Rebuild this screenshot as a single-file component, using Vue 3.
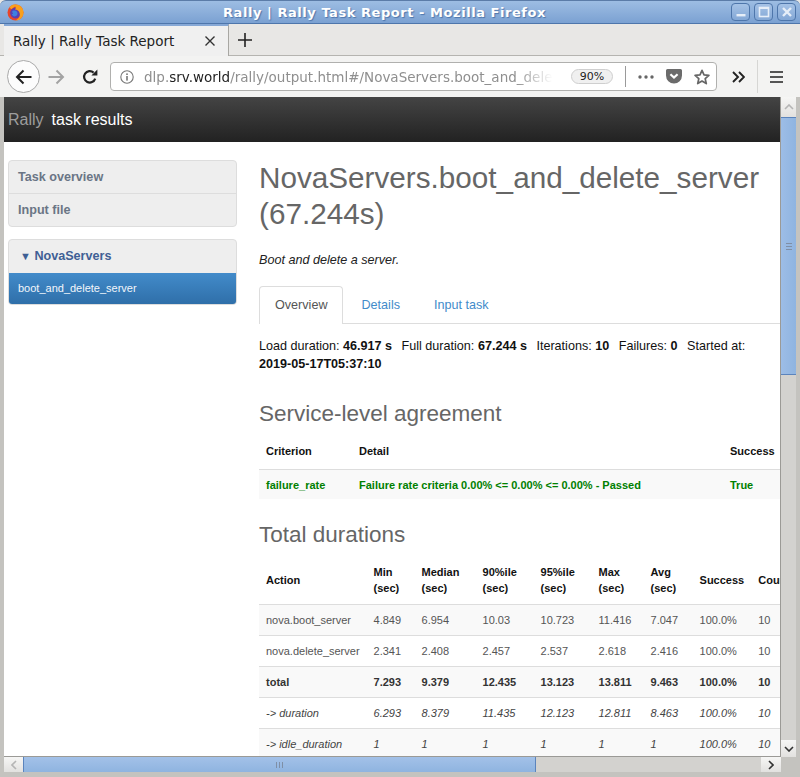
<script setup>
const durationRows = [
  { cls: '', cells: ['nova.boot_server', '4.849', '6.954', '10.03', '10.723', '11.416', '7.047', '100.0%', '10'] },
  { cls: '', cells: ['nova.delete_server', '2.341', '2.408', '2.457', '2.537', '2.618', '2.416', '100.0%', '10'] },
  { cls: 'bold', cells: ['total', '7.293', '9.379', '12.435', '13.123', '13.811', '9.463', '100.0%', '10'] },
  { cls: 'ital', cells: ['-> duration', '6.293', '8.379', '11.435', '12.123', '12.811', '8.463', '100.0%', '10'] },
  { cls: 'ital', cells: ['-> idle_duration', '1', '1', '1', '1', '1', '1', '100.0%', '10'] },
];
const colWidths = [106, 48, 61, 58, 58, 52, 49, 58, 50];
</script>

<template>
  <div class="window">
    <div class="titlebar">
      <svg class="fx-logo" width="17" height="17" viewBox="0 0 17 17">
        <circle cx="8.5" cy="8.5" r="8" fill="#e8452c" />
        <circle cx="8.5" cy="9" r="5.4" fill="#5a3fb0" />
        <path d="M1 6 C2 2.5 5 .5 8.5 .5 C13 .5 16.5 4 16.5 8.5 C16.5 13 13 16.5 8.5 16.5 C12 15 13.5 12 12.6 9 C12 7 10 5.5 8 5.6 C9 4.4 9 3.4 8.2 2.6 C7 3.4 5.4 4 4.6 5.2 C3.6 4.8 3 4 2.8 3 C2 3.8 1.4 5 1 6 Z" fill="#f9a01b" />
        <path d="M5.4 7 C7 6.2 9.6 6.6 10.4 8.6 C11 10.6 9.6 12.4 7.6 12.4 C6 12.4 4.8 11.2 4.6 9.8 C5.2 10.2 6 10 6 9.4 C5.4 8.8 5 8 5.4 7 Z" fill="#3e7fe0" />
      </svg>
      <span class="win-title">Rally | Rally Task Report - Mozilla Firefox</span>
      <div class="win-btns">
        <button class="win-btn">
          <svg width="12" height="12" viewBox="0 0 12 12"><rect x="1.5" y="8" width="9" height="2.4" fill="#e6eef8" /></svg>
        </button>
        <button class="win-btn">
          <svg width="12" height="12" viewBox="0 0 12 12"><rect x="1.5" y="1.5" width="9" height="9" fill="none" stroke="#e6eef8" stroke-width="1.6" /><rect x="1" y="1" width="10" height="2" fill="#e6eef8" /></svg>
        </button>
        <button class="win-btn">
          <svg width="12" height="12" viewBox="0 0 12 12"><path d="M2 2 L10 10 M10 2 L2 10" stroke="#e6eef8" stroke-width="2.4" /></svg>
        </button>
      </div>
    </div>

    <div class="tabbar">
      <div class="tab">
        <span class="tab-label">Rally | Rally Task Report</span>
        <svg width="12" height="12" viewBox="0 0 12 12"><path d="M1.5 1.5 L10.5 10.5 M10.5 1.5 L1.5 10.5" stroke="#333" stroke-width="1.4" /></svg>
      </div>
      <svg class="new-tab" width="14" height="14" viewBox="0 0 14 14"><path d="M7 0 V14 M0 7 H14" stroke="#222" stroke-width="1.6" /></svg>
    </div>

    <div class="toolbar">
      <div class="back-btn">
        <svg width="18" height="16" viewBox="0 0 18 16"><path d="M16.5 8 H2 M8.5 1.5 L2 8 L8.5 14.5" fill="none" stroke="#222" stroke-width="2" /></svg>
      </div>
      <svg class="fwd" width="17" height="16" viewBox="0 0 17 16"><path d="M0.5 8 H15 M8.5 1.5 L15 8 L8.5 14.5" fill="none" stroke="#a3a3a3" stroke-width="2" /></svg>
      <svg class="reload" width="16" height="16" viewBox="0 0 16 16"><path d="M13.2 9.6 A5.7 5.7 0 1 1 11.6 3.6" fill="none" stroke="#222" stroke-width="2.2" /><path d="M9.4 6.6 H15.4 V0.6 Z" fill="#222" /></svg>
      <div class="urlbar">
        <svg class="info" width="14" height="14" viewBox="0 0 14 14"><circle cx="7" cy="7" r="6.2" fill="none" stroke="#777" stroke-width="1.1" /><rect x="6.2" y="6" width="1.6" height="4.6" fill="#777" /><rect x="6.2" y="3.4" width="1.6" height="1.6" fill="#777" /></svg>
        <div class="url"><span class="dim">dlp.</span>srv.world<span class="dim">/rally/output.html#/NovaServers.boot_and_delete_server</span></div>
        <span class="zoom-pill">90%</span>
        <span class="url-sep"></span>
        <svg class="dots" width="16" height="4" viewBox="0 0 16 4"><circle cx="2" cy="2" r="1.7" fill="#666" /><circle cx="8" cy="2" r="1.7" fill="#666" /><circle cx="14" cy="2" r="1.7" fill="#666" /></svg>
        <svg class="pocket" width="16" height="15" viewBox="0 0 16 15"><path d="M1.5 0 H14.5 A1.5 1.5 0 0 1 16 1.5 V6.5 A8 8 0 0 1 0 6.5 V1.5 A1.5 1.5 0 0 1 1.5 0 Z" fill="#6b6b6b" /><path d="M4.4 5.2 L8 8.6 L11.6 5.2" fill="none" stroke="#fff" stroke-width="2.2" /></svg>
        <svg class="star" width="16" height="16" viewBox="0 0 16 16"><path d="M8 1.4 L10 5.9 L14.9 6.4 L11.2 9.7 L12.3 14.6 L8 12 L3.7 14.6 L4.8 9.7 L1.1 6.4 L6 5.9 Z" fill="none" stroke="#666" stroke-width="1.7" stroke-linejoin="round" /></svg>
      </div>
      <svg class="chevrons" width="13" height="12" viewBox="0 0 13 12"><path d="M1 1 L6 6 L1 11 M7 1 L12 6 L7 11" fill="none" stroke="#222" stroke-width="1.9" /></svg>
      <span class="tool-sep"></span>
      <svg class="burger" width="13" height="12" viewBox="0 0 13 12"><path d="M0 1 H13 M0 6 H13 M0 11 H13" stroke="#222" stroke-width="1.6" /></svg>
    </div>

    <div class="viewport">
      <div class="page-row">
        <div class="page">
          <div class="navbar">
            <span class="brand">Rally</span>
            <span class="brand-sub">task results</span>
          </div>
          <div class="columns">
            <aside class="sidebar">
              <div class="panel">
                <div class="panel-row">Task overview</div>
                <div class="panel-row">Input file</div>
              </div>
              <div class="panel">
                <div class="panel-row scenario-head"><span class="caret">▼</span> NovaServers</div>
                <div class="scenario-item">boot_and_delete_server</div>
              </div>
            </aside>
            <main class="content">
              <h1>NovaServers.boot_and_delete_server (67.244s)</h1>
              <p class="descr">Boot and delete a server.</p>
              <div class="tabs">
                <span class="nav-tab active">Overview</span>
                <span class="nav-tab">Details</span>
                <span class="nav-tab">Input task</span>
              </div>
              <div class="summary">
                Load duration: <b>46.917 s</b> <span class="gap"></span>Full duration: <b>67.244 s</b> <span class="gap"></span>Iterations: <b>10</b> <span class="gap"></span>Failures: <b>0</b> <span class="gap"></span>Started at: <b>2019-05-17T05:37:10</b>
              </div>

              <h2>Service-level agreement</h2>
              <table class="tbl sla">
                <colgroup><col style="width: 93px" /><col style="width: 371px" /><col style="width: 58px" /></colgroup>
                <thead>
                  <tr><th>Criterion</th><th>Detail</th><th>Success</th></tr>
                </thead>
                <tbody>
                  <tr class="pass">
                    <td>failure_rate</td>
                    <td>Failure rate criteria 0.00% &lt;= 0.00% &lt;= 0.00% - Passed</td>
                    <td>True</td>
                  </tr>
                </tbody>
              </table>

              <h2 class="second">Total durations</h2>
              <table class="tbl durations">
                <colgroup><col v-for="(w, i) in colWidths" :key="i" :style="{ width: w + 'px' }" /></colgroup>
                <thead>
                  <tr>
                    <th>Action</th><th>Min<br />(sec)</th><th>Median<br />(sec)</th><th>90%ile<br />(sec)</th><th>95%ile<br />(sec)</th><th>Max<br />(sec)</th><th>Avg<br />(sec)</th><th>Success</th><th>Count</th>
                  </tr>
                </thead>
                <tbody>
                  <tr v-for="row in durationRows" :key="row.cells[0]" :class="row.cls">
                    <td v-for="(c, i) in row.cells" :key="i">{{ c }}</td>
                  </tr>
                </tbody>
              </table>
            </main>
          </div>
        </div>
        <div class="vscroll">
          <div class="sb-btn sb-up">
            <svg width="10" height="6" viewBox="0 0 10 6"><path d="M1 5 L5 1 L9 5" fill="none" stroke="#b5b5b5" stroke-width="1.6" /></svg>
          </div>
          <div class="v-thumb">
            <svg width="6" height="7" viewBox="0 0 6 7"><path d="M0 .5 H6 M0 3.5 H6 M0 6.5 H6" stroke="#7f8fa6" stroke-width="1" /></svg>
          </div>
          <div class="v-track"></div>
          <div class="sb-btn sb-down">
            <svg width="10" height="6" viewBox="0 0 10 6"><path d="M1 1 L5 5 L9 1" fill="none" stroke="#333" stroke-width="1.6" /></svg>
          </div>
        </div>
      </div>
      <div class="hscroll">
        <div class="sb-btn sb-left">
          <svg width="6" height="10" viewBox="0 0 6 10"><path d="M5 1 L1 5 L5 9" fill="none" stroke="#b5b5b5" stroke-width="1.6" /></svg>
        </div>
        <div class="h-thumb">
          <svg width="7" height="6" viewBox="0 0 7 6"><path d="M.5 0 V6 M3.5 0 V6 M6.5 0 V6" stroke="#7f8fa6" stroke-width="1" /></svg>
        </div>
        <div class="h-track"></div>
        <div class="sb-btn sb-right">
          <svg width="6" height="10" viewBox="0 0 6 10"><path d="M1 1 L5 5 L1 9" fill="none" stroke="#333" stroke-width="1.6" /></svg>
        </div>
        <div class="corner"></div>
      </div>
    </div>
  </div>
</template>

<style>
html, body { margin: 0; overflow: hidden; background: #fff; }
</style>

<style scoped>
.window {
  width: 800px;
  height: 777px;
  display: flex;
  flex-direction: column;
  overflow: hidden;
  box-sizing: border-box;
  background: #e8e7e5;
  font-family: "Liberation Sans", Arial, sans-serif;
  border-bottom: 5px solid #c4c3bf;
}

/* window chrome */
.titlebar {
  height: 24px;
  flex: none;
  display: flex;
  align-items: center;
  padding: 0 4px 0 7px;
  box-sizing: border-box;
  background: linear-gradient(#9dbde3, #7ba1d2);
  border-bottom: 1px solid #4e76ab;
  border-top: 1px solid #5b7ca8;
  border-radius: 6px 6px 0 0;
}
.fx-logo { flex: none; }
.win-title {
  flex: 1;
  text-align: center;
  font-family: "DejaVu Sans", sans-serif;
  font-weight: 700;
  font-size: 13px;
  letter-spacing: 0.55px;
  color: #fff;
  text-shadow: 1px 1px 1px #4e76ab;
  padding-left: 14px;
}
.win-btns { display: flex; gap: 4px; }
.win-btn {
  width: 19px;
  height: 18px;
  padding: 0;
  display: flex;
  align-items: center;
  justify-content: center;
  border: 1px solid #4e76ab;
  border-radius: 4px;
  background: linear-gradient(#a5c2e6, #84a8d6);
}

.tabbar {
  height: 32px;
  flex: none;
  display: flex;
  align-items: center;
  padding-left: 4px;
  box-sizing: border-box;
  background: #e8e7e5;
  border-left: 0;
  border-bottom: 1px solid #b5b4b0;
}
.tab {
  width: 225px;
  height: 32px;
  box-sizing: border-box;
  display: flex;
  align-items: center;
  padding: 0 12px 0 9px;
  justify-content: space-between;
  background: #f0f0f0;
  border-top: 2px solid #86a8d6;
  border-right: 1px solid #a8a7a3;
}
.tab-label {
  font-family: "DejaVu Sans", sans-serif;
  font-size: 13.5px;
  color: #222;
}
.new-tab { margin-left: 9px; }

.toolbar {
  height: 41px;
  flex: none;
  display: flex;
  align-items: center;
  padding-left: 7px;
  box-sizing: border-box;
  background: #f3f3f2;
  border-left: 4px solid #f3f3f2;
  margin-left: 0;
}
.toolbar { padding-left: 3px; }
.back-btn {
  width: 33px;
  height: 33px;
  box-sizing: border-box;
  flex: none;
  border: 1px solid #a9a9a9;
  border-radius: 50%;
  background: #fcfcfc;
  display: flex;
  align-items: center;
  justify-content: center;
}
.fwd { margin-left: 8px; flex: none; }
.reload { margin-left: 17px; flex: none; }
.urlbar {
  width: 607px;
  height: 29px;
  flex: none;
  margin-left: 12px;
  box-sizing: border-box;
  display: flex;
  align-items: center;
  padding-left: 9px;
  background: #fff;
  border: 1px solid #b0b0ae;
  border-radius: 4px;
}
.info { flex: none; }
.url {
  width: 413px;
  margin-left: 10px;
  flex: none;
  white-space: nowrap;
  overflow: hidden;
  font-family: "DejaVu Sans", sans-serif;
  font-size: 13.5px;
  color: #1f1f1f;
  -webkit-mask-image: linear-gradient(to right, #000 90%, transparent 99%);
  mask-image: linear-gradient(to right, #000 90%, transparent 99%);
}
.dim { color: #8f8f8f; }
.zoom-pill {
  width: 42px;
  height: 15px;
  flex: none;
  margin-left: 14px;
  box-sizing: border-box;
  border: 1px solid #cfcfcf;
  border-radius: 8px;
  background: #f0f0f0;
  font-family: "DejaVu Sans", sans-serif;
  font-size: 11px;
  line-height: 13px;
  text-align: center;
  color: #222;
}
.url-sep { width: 1px; height: 21px; margin-left: 12px; background: #9a9a9a; flex: none; }
.dots { margin-left: 12px; flex: none; }
.pocket { margin-left: 12px; flex: none; }
.star { margin-left: 12px; flex: none; }
.chevrons { margin-left: 15px; flex: none; }
.tool-sep { width: 1px; height: 33px; margin-left: 12px; background: #d6d6d4; flex: none; }
.burger { margin-left: 12px; flex: none; }

/* viewport + scrollbars */
.viewport {
  flex: 1;
  min-height: 0;
  display: flex;
  flex-direction: column;
  padding-left: 4px;
  padding-right: 4px;
  background: #c4c3bf;
}
.page-row { flex: 1; min-height: 0; display: flex; }
.page { flex: 1; min-width: 0; overflow: hidden; background: #fff; border-bottom: 1px solid #9b9a96; }

.vscroll {
  width: 15px;
  flex: none;
  display: flex;
  flex-direction: column;
  background: #d3d2cf;
  border-left: 1px solid #9b9a96;
}
.sb-btn {
  flex: none;
  display: flex;
  align-items: center;
  justify-content: center;
  background: linear-gradient(#f6f6f5, #e2e1df);
}
.sb-up { height: 20px; border-bottom: 1px solid #5b84bd; }
.sb-down { height: 17px; }
.v-thumb {
  height: 256px;
  flex: none;
  display: flex;
  align-items: center;
  justify-content: center;
  background: linear-gradient(to right, #9dbde6, #8fb4e0);
  border-bottom: 1px solid #5b84bd;
}
.v-track { flex: 1; background: #d3d2cf; }

.hscroll { height: 15px; flex: none; display: flex; background: #d3d2cf; }
.sb-left { width: 19px; border-right: 1px solid #5b84bd; }
.sb-right { width: 20px; }
.h-thumb {
  width: 511px;
  flex: none;
  display: flex;
  align-items: center;
  justify-content: center;
  background: linear-gradient(#a3c1e8, #8fb4e0);
  border-right: 1px solid #5b84bd;
}
.h-track { flex: 1; background: #d3d2cf; }
.corner { width: 15px; flex: none; background: #c4c3bf; }

/* page */
.navbar {
  height: 45px;
  width: 777px;
  box-sizing: border-box;
  display: flex;
  align-items: center;
  padding-left: 4px;
  gap: 8px;
  background: linear-gradient(#444, #222);
  font-size: 16px;
}
.brand { color: #9d9d9d; }
.brand-sub { color: #fff; }

.columns { display: flex; align-items: flex-start; }
.sidebar {
  width: 229px;
  flex: none;
  margin: 18px 0 0 4px;
  display: flex;
  flex-direction: column;
  gap: 12px;
}
.panel {
  background: #eee;
  border: 1px solid #ddd;
  border-radius: 4px;
  overflow: hidden;
}
.panel-row {
  height: 33px;
  line-height: 32px;
  box-sizing: border-box;
  padding-left: 9px;
  font-size: 12.6px;
  font-weight: 700;
  color: #6a7585;
  border-top: 1px solid #ddd;
}
.panel-row:first-child { border-top: 0; height: 32px; }
.scenario-head { color: #3f5f95; padding-left: 11px; height: 33px !important; font-size: 12.6px; }
.caret { font-size: 11px; }
.scenario-item {
  height: 31px;
  line-height: 30px;
  padding-left: 9px;
  font-size: 11px;
  color: #f2f6fb;
  background: linear-gradient(#428bca, #2f6fa9);
}

.content { flex: none; width: 620px; margin-left: 22px; }
h1 {
  margin: 18px 0 0;
  width: 500px;
  font-size: 29.7px;
  font-weight: 400;
  line-height: 36px;
  color: #666;
}
.descr {
  margin: 19px 0 0;
  font-size: 12.6px;
  line-height: 18px;
  font-style: italic;
  color: #222;
}
.tabs {
  display: flex;
  width: 522px;
  height: 38px;
  margin-top: 17px;
  box-sizing: border-box;
  border-bottom: 1px solid #ddd;
}
.nav-tab {
  height: 37px;
  box-sizing: border-box;
  padding: 0 15px;
  margin-right: 2px;
  line-height: 37px;
  font-size: 12.6px;
  color: #428bca;
  border: 1px solid transparent;
  border-bottom: 0;
}
.nav-tab.active {
  height: 38px;
  color: #555;
  background: #fff;
  border-color: #ddd;
  border-radius: 4px 4px 0 0;
}
.summary {
  width: 500px;
  margin-top: 13px;
  font-size: 12.6px;
  line-height: 18px;
  color: #111;
}
.gap { display: inline-block; width: 6px; }
h2 {
  margin: 27px 0 0;
  font-size: 22.5px;
  font-weight: 400;
  line-height: 28px;
  color: #666;
}
h2.second { margin-top: 22px; }

.tbl {
  table-layout: fixed;
  border-collapse: collapse;
  font-size: 11px;
}
.sla { margin-top: 5px; }
.sla th { height: 36px; }
.sla td { height: 29px; }
.tbl th {
  padding: 0 7px;
  text-align: left;
  font-weight: 700;
  line-height: 16px;
  color: #111;
  border-bottom: 1px solid #ddd;
}
.tbl td {
  padding: 0 7px;
  color: #555;
  border-bottom: 1px solid #ddd;
  white-space: nowrap;
}
.tbl tbody tr:last-child td { border-bottom: 0; }
.tbl tbody tr:nth-child(odd) { background: #f9f9f9; }
.pass td { color: #008000; font-weight: 700; }
.durations { margin-top: 6px; }
.durations th { height: 49px; }
.durations td { height: 30px; }
.bold td { font-weight: 700; color: #333; }
.ital td { font-style: italic; color: #444; }
</style>
